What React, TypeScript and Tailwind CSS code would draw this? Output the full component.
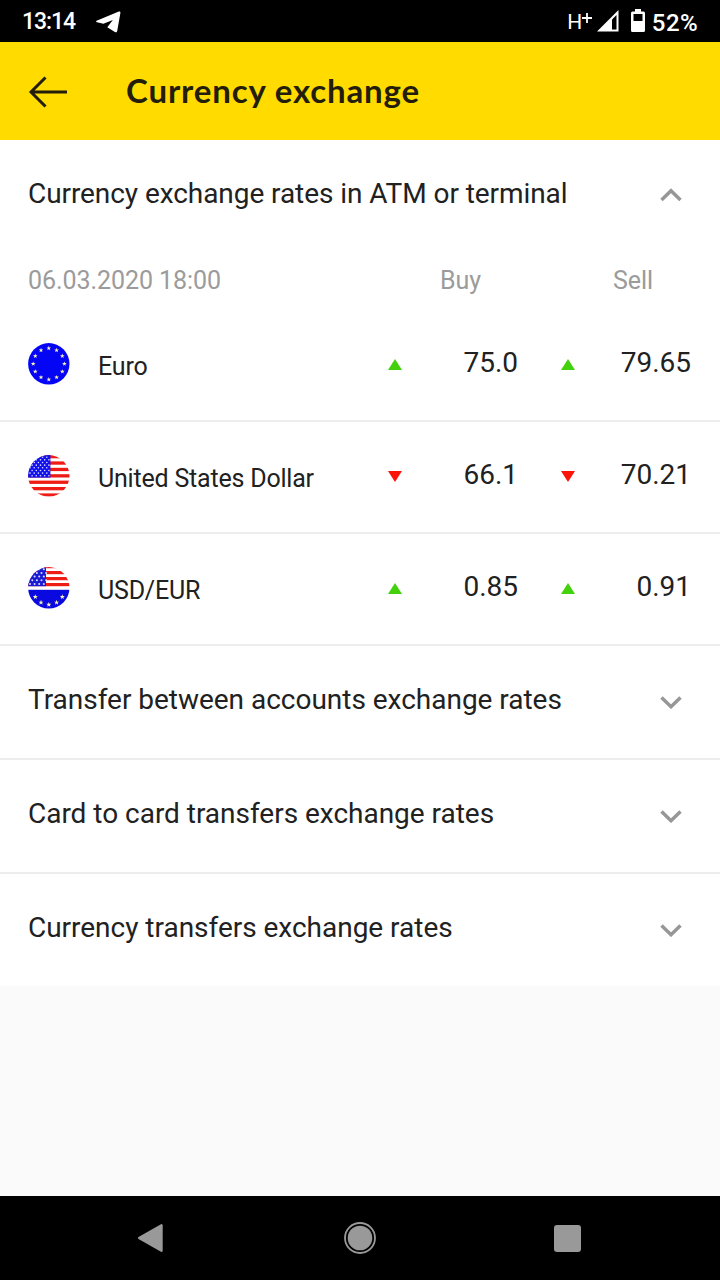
import type { ReactNode } from "react";

type Trend = "up" | "down";

const rates: { name: string; flag: ReactNode; trend: Trend; buy: string; sell: string }[] = [
  { name: "Euro", flag: <EuroFlag />, trend: "up", buy: "75.0", sell: "79.65" },
  { name: "United States Dollar", flag: <DollarFlag />, trend: "down", buy: "66.1", sell: "70.21" },
  { name: "USD/EUR", flag: <MixedFlag />, trend: "up", buy: "0.85", sell: "0.91" },
];

const sections = [
  "Transfer between accounts exchange rates",
  "Card to card transfers exchange rates",
  "Currency transfers exchange rates",
];

const STAR = "M0-2.2.55-.7 2.1-.7.9.3 1.3 1.8 0 .9-1.3 1.8-.9.3-2.1-.7-.55-.7Z";

// positions are hours on a clock face
function StarRing({ positions, cy = 20.8, r = 15.6, scale = 1 }: { positions: number[]; cy?: number; r?: number; scale?: number }) {
  return (
    <g fill="#f4efb4">
      {positions.map((p) => {
        const a = (p * Math.PI) / 6;
        return (
          <path
            key={p}
            d={STAR}
            transform={`translate(${20.8 + r * Math.sin(a)} ${cy - r * Math.cos(a)}) scale(${scale})`}
          />
        );
      })}
    </g>
  );
}

function EuroFlag() {
  return (
    <svg viewBox="0 0 42 42" className="mb-0.5 size-[42px]">
      <circle cx="20.8" cy="20.8" r="20.7" fill="#0505f5" />
      <StarRing positions={[0, 1, 2, 3, 4, 5, 6, 7, 8, 9, 10, 11]} scale={1.1} />
    </svg>
  );
}

function CantonStars({ rows, cols, dx, dy, r = 0.75 }: { rows: number; cols: number; dx: number; dy: number; r?: number }) {
  return (
    <g fill="#dcdcff">
      {Array.from({ length: rows * cols }, (_, i) => {
        const row = Math.floor(i / cols);
        const x = 2 + (i % cols) * dx + (row % 2 ? dx / 2 : 0);
        return <circle key={i} cx={x} cy={2.2 + row * dy} r={r} />;
      })}
    </g>
  );
}

function DollarFlag() {
  return (
    <svg viewBox="0 0 42 42" className="mb-0.5 size-[42px]">
      <clipPath id="usd">
        <circle cx="20.8" cy="20.8" r="20.7" />
      </clipPath>
      <g clipPath="url(#usd)">
        <rect width="42" height="42" fill="#fff" />
        {[0, 1, 2, 3, 4, 5, 6].map((i) => (
          <rect key={i} y={i * 6.4} width="42" height="3.3" fill="#ee1c14" />
        ))}
        <rect width="22.4" height="22.6" fill="#1212ee" />
        <CantonStars rows={8} cols={5} dx={4.2} dy={2.65} r={0.8} />
      </g>
    </svg>
  );
}

function MixedFlag() {
  return (
    <svg viewBox="0 0 42 42" className="mb-0.5 size-[42px]">
      <clipPath id="mixed">
        <circle cx="20.8" cy="20.8" r="20.7" />
      </clipPath>
      <g clipPath="url(#mixed)">
        <rect width="42" height="42" fill="#fff" />
        {[0, 1, 2, 3].map((i) => (
          <rect key={i} y={-2 + i * 6} width="42" height="3.2" fill="#ee1c14" />
        ))}
        <rect width="18" height="19.2" fill="#1a1ad2" />
        <CantonStars rows={5} cols={4} dx={4.6} dy={3.7} r={1} />
        <rect y="22.8" width="42" height="20" fill="#0a0ae0" />
        <StarRing positions={[4, 5, 6, 7, 8]} cy={22} scale={1.2} />
      </g>
    </svg>
  );
}

function TrendMark({ trend }: { trend: Trend }) {
  return (
    <svg viewBox="0 0 14 11" className="mb-0.5 h-[11px] w-3.5">
      {trend === "up" ? <path d="M7 0l7 11H0z" fill="#43d10c" /> : <path d="M0 0h14L7 11z" fill="#fb1508" />}
    </svg>
  );
}

function Chevron({ open = false }: { open?: boolean }) {
  return (
    <svg viewBox="0 0 22 14" className="mr-2.5 h-3.5 w-[22px]" fill="none" stroke="#979797" strokeWidth="3.5">
      <path d={open ? "M1.5 12 11 2.8 20.5 12" : "M1.5 2.5 11 11.7 20.5 2.5"} />
    </svg>
  );
}

function StatusBar() {
  return (
    <div className="flex h-[42px] items-center justify-between bg-black pt-0.5 pr-[22px] pl-[22px] text-white">
      <div className="flex items-center">
        <span className="w-[74px] pt-px text-[23px] font-medium tracking-[-1.1px]">13:14</span>
        <svg viewBox="0 0 25 22" className="h-[22px] w-[25px]" fill="#fff">
          <path d="M.6 9.700 22.800.6c1-.4 1.700.1 1.600 1.300L21.200 19.900c-.3 1.300-1.200 1.700-2.300 1l-7.600-4.600 5.500-7.300L7.400 12.800 1 11.300c-1-.3-1.200-1.200-.4-1.600Z" />
        </svg>
      </div>
      <div className="flex items-center">
        <span className="text-[21px] leading-none tracking-[-0.5px]">H</span>
        <svg viewBox="0 0 10 10" className="mr-[5px] mb-2 size-2.5" stroke="#fff" strokeWidth="1.8">
          <path d="M5 0v10M0 5h10" />
        </svg>
        <svg viewBox="0 0 22 22" className="mr-3 mb-0.5 h-[22px] w-[22px]">
          <path d="M0 21.500 21.500 0v21.500z" fill="#fff" />
          <path d="M15 9.500 19.500 5v14.500H15z" fill="#000" />
        </svg>
        <svg viewBox="0 0 14 23" className="mr-[7px] mb-[3px] h-[23px] w-3.5">
          <path d="M4 0h6v2.500h2.500a1.500 1.500 0 0 1 1.500 1.500v17.500a1.500 1.500 0 0 1-1.500 1.500h-11A1.500 1.500 0 0 1 0 21.500V4a1.500 1.500 0 0 1 1.500-1.500H4z" fill="#fff" />
          <path d="M2.500 5h9v7h-9z" fill="#000" />
        </svg>
        <span className="pt-px text-[24px] font-medium tracking-[0.4px]">52%</span>
      </div>
    </div>
  );
}

function NavBar() {
  return (
    <div className="mt-auto flex h-[84px] items-center bg-black pl-[137px]">
      <svg viewBox="0 0 26 30" className="h-[30px] w-[26px]" fill="#999">
        <path d="M1.500 14 23.500 1.400Q25.700.4 25.700 2.600v24.800q0 2.200-2.200 1.200L1.500 16q-1.500-1 0-2Z" />
      </svg>
      <svg viewBox="0 0 32 32" className="ml-[181px] size-8">
        <circle cx="16" cy="16" r="15" fill="none" stroke="#999" strokeWidth="1.800" />
        <circle cx="16" cy="16" r="12.300" fill="#999" />
      </svg>
      <div className="ml-[178px] size-[27px] rounded-[3px] bg-[#999]" />
    </div>
  );
}

export default function App() {
  return (
    <div className="flex h-[1280px] w-[720px] flex-col overflow-hidden bg-[#fafafa] font-['Roboto',sans-serif] text-[#212121]">
      <StatusBar />

      <header className="flex h-[98px] items-center bg-[#ffdb00] pt-0.5 pl-7">
        <svg viewBox="0 0 40 32" className="h-8 w-10" fill="none" stroke="#231d0c" strokeWidth="3">
          <path d="M17.500 1.500 3 16l14.500 14.500M3 16h36" />
        </svg>
        <h1 className="ml-[58px] pb-[3px] font-['Lato',sans-serif] text-[33px] leading-none font-bold tracking-[0.85px] text-[#231d0c]">
          Currency exchange
        </h1>
      </header>

      <main className="bg-white">
        <div className="flex h-[110px] items-center justify-between px-7">
          <h2 className="pb-0.5 text-[28px] tracking-[-0.07px]">Currency exchange rates in ATM or terminal</h2>
          <Chevron open />
        </div>

        <div className="grid h-[60px] grid-cols-[412px_173px_1fr] px-7 pt-3 text-[25px] tracking-[-0.07px] text-[#9b9b9b]">
          <span>06.03.2020 18:00</span>
          <span>Buy</span>
          <span>Sell</span>
        </div>

        {rates.map((r) => (
          <div
            key={r.name}
            className="grid h-28 grid-cols-[70px_290px_14px_116px_43px_14px_1fr] items-center border-b-2 border-[#ededed] px-7"
          >
            {r.flag}
            <span className="pt-[3px] text-[25px] tracking-[-0.2px]">{r.name}</span>
            <TrendMark trend={r.trend} />
            <span className="pb-1 text-right text-[28px]">{r.buy}</span>
            <span />
            <TrendMark trend={r.trend} />
            <span className="pr-px pb-1 text-right text-[28px]">{r.sell}</span>
          </div>
        ))}

        {sections.map((title) => (
          <div
            key={title}
            className="flex h-[114px] items-center justify-between border-b-2 border-[#ededed] px-7 last:h-28 last:border-b-0"
          >
            <h2 className="pb-1 text-[28px] tracking-[-0.02px]">{title}</h2>
            <Chevron />
          </div>
        ))}
      </main>

      <NavBar />
    </div>
  );
}
